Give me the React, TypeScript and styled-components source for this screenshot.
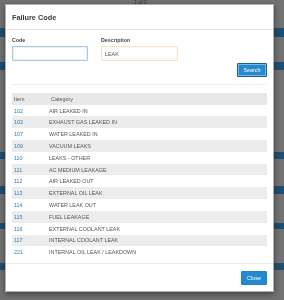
import React from 'react'
import styled, { createGlobalStyle } from 'styled-components'

const GlobalStyle = createGlobalStyle`
  html, body {
    margin: 0;
    padding: 0;
    width: 284px;
    height: 300px;
    overflow: hidden;
    background: #727272;
    font-family: 'Liberation Sans', Arial, Helvetica, sans-serif;
  }
`

const rows = [
  { item: '102', category: 'AIR LEAKED IN' },
  { item: '103', category: 'EXHAUST GAS LEAKED IN' },
  { item: '107', category: 'WATER LEAKED IN' },
  { item: '109', category: 'VACUUM LEAKS' },
  { item: '110', category: 'LEAKS - OTHER' },
  { item: '111', category: 'AC MEDIUM LEAKAGE' },
  { item: '112', category: 'AIR LEAKED OUT' },
  { item: '113', category: 'EXTERNAL OIL LEAK' },
  { item: '114', category: 'WATER LEAK OUT' },
  { item: '115', category: 'FUEL LEAKAGE' },
  { item: '116', category: 'EXTERNAL COOLANT LEAK' },
  { item: '117', category: 'INTERNAL COOLANT LEAK' },
  { item: '221', category: 'INTERNAL OIL LEAK / LEAKDOWN' },
]

// page behind the dimmed backdrop
const Page = styled.div`
  display: flex;
  flex-direction: column;
  width: 284px;
  height: 300px;
  background: #727272;
`

const Band = styled.div<{ $blue?: boolean; $h: number }>`
  height: ${(p) => p.$h}px;
  flex-shrink: 0;
  background: ${(p) => (p.$blue ? '#1f4e70' : 'transparent')};
`

const Pager = styled.div`
  margin-left: 134px;
  font-size: 5px;
  line-height: 5px;
  color: #333;
`

const BottomBoxes = styled.div`
  display: flex;
  gap: 91px;
  padding-left: 85px;
  padding-top: 2px;
`

const GhostBox = styled.div<{ $w: number }>`
  width: ${(p) => p.$w}px;
  height: 12px;
  border: 1px solid #5a6f82;
  background: #7a7a7a;
`

const Modal = styled.div`
  position: fixed;
  left: 5px;
  top: 4px;
  width: 269px;
  height: 288px;
  box-sizing: border-box;
  background: #fff;
  border: 1px solid rgba(0, 0, 0, 0.3);
  box-shadow: 0 2px 6px rgba(0, 0, 0, 0.45);
  display: flex;
  flex-direction: column;
`

const Header = styled.div`
  height: 24px;
  padding: 0 6px;
  display: flex;
  align-items: center;
  border-bottom: 1px solid #e5e5e5;
`

const Title = styled.h4`
  margin: 0;
  padding-top: 1px;
  font-size: 7.3px;
  font-weight: bold;
  color: #3a3a3a;
`

const Body = styled.div`
  flex: 1;
  padding: 7px 6px 0 6px;
`

const FormRow = styled.div`
  display: grid;
  grid-template-columns: 89px 77px;
`

const Field = styled.div<{ $w: number }>`
  display: flex;
  flex-direction: column;
  width: ${(p) => p.$w}px;
`

const Label = styled.label`
  font-size: 5.3px;
  line-height: 6px;
  font-weight: bold;
  color: #444;
  margin-bottom: 3px;
`

const Input = styled.input<{ $tint: 'blue' | 'amber' }>`
  box-sizing: border-box;
  height: 15px;
  width: 100%;
  margin: 0;
  padding: 0 3px;
  font-family: inherit;
  font-size: 5.4px;
  color: #555;
  outline: none;
  border-radius: 1px;
  border: 1px solid
    ${(p) => (p.$tint === 'blue' ? '#a9c9e4' : '#f4e5c9')};
  box-shadow: ${(p) =>
    p.$tint === 'blue'
      ? 'inset 0 0 0 0.5px #d4e5f3'
      : 'inset 0 0 0 0.5px #fcf4e6'};
`

const ButtonRow = styled.div`
  display: flex;
  justify-content: flex-end;
  margin-top: 2px;
`

const Button = styled.button<{ $w: number; $ring?: boolean }>`
  box-sizing: border-box;
  width: ${(p) => p.$w}px;
  height: 14px;
  padding: 0;
  margin: 0;
  font-family: inherit;
  font-size: 5.4px;
  color: #fff;
  background: #2589cf;
  border: 1px solid ${(p) => (p.$ring ? '#1a5f94' : '#2181c4')};
  box-shadow: ${(p) => (p.$ring ? 'inset 0 0 0 1px #7bb9e4' : 'none')};
  border-radius: 1px;
`

const Divider = styled.hr`
  margin: 7px 0 0 0;
  border: 0;
  border-top: 1px solid #eeeeee;
`

const Table = styled.table`
  margin-top: 8px;
  width: 100%;
  border-collapse: collapse;
  font-size: 5.4px;
`

const HeadCell = styled.th`
  height: 11.6px;
  padding: 0 0 0 2px;
  text-align: left;
  font-weight: normal;
  color: #555;
  background: #e8e8e8;
`

const Row = styled.tr<{ $striped: boolean }>`
  height: 11.82px;
  background: ${(p) => (p.$striped ? '#ececec' : '#fff')};
`

const ItemCell = styled.td`
  width: 35px;
  padding: 0 0 0 2px;
  color: #2b80c1;
`

const CategoryCell = styled.td`
  padding: 0;
  color: #555;
`

const Footer = styled.div`
  border-top: 1px solid #eaeaea;
  padding: 7px 6px 6px 6px;
  display: flex;
  justify-content: flex-end;
`

export default function App() {
  return (
    <>
      <GlobalStyle />
      <Page>
        <Band $h={28}>
          <Pager>1 of 2</Pager>
        </Band>
        <Band $blue $h={9} />
        <Band $h={25} />
        <Band $blue $h={8} />
        <Band $h={82} />
        <Band $blue $h={7} />
        <Band $h={27} />
        <Band $blue $h={8} />
        <Band $h={29} />
        <Band $blue $h={6} />
        <Band $h={34} />
        <Band $blue $h={7} />
        <BottomBoxes>
          <GhostBox $w={22} />
          <GhostBox $w={49} />
        </BottomBoxes>
      </Page>

      <Modal>
        <Header>
          <Title>Failure Code</Title>
        </Header>
        <Body>
          <FormRow>
            <Field $w={76}>
              <Label>Code</Label>
              <Input $tint="blue" defaultValue="" />
            </Field>
            <Field $w={77}>
              <Label>Description</Label>
              <Input $tint="amber" defaultValue="LEAK" />
            </Field>
          </FormRow>
          <ButtonRow>
            <Button $w={30} $ring>
              Search
            </Button>
          </ButtonRow>
          <Divider />
          <Table>
            <thead>
              <tr>
                <HeadCell>Item</HeadCell>
                <HeadCell>Category</HeadCell>
              </tr>
            </thead>
            <tbody>
              {rows.map((r, i) => (
                <Row key={r.item} $striped={i % 2 === 1}>
                  <ItemCell>{r.item}</ItemCell>
                  <CategoryCell>{r.category}</CategoryCell>
                </Row>
              ))}
            </tbody>
          </Table>
        </Body>
        <Footer>
          <Button $w={26}>Close</Button>
        </Footer>
      </Modal>
    </>
  )
}
